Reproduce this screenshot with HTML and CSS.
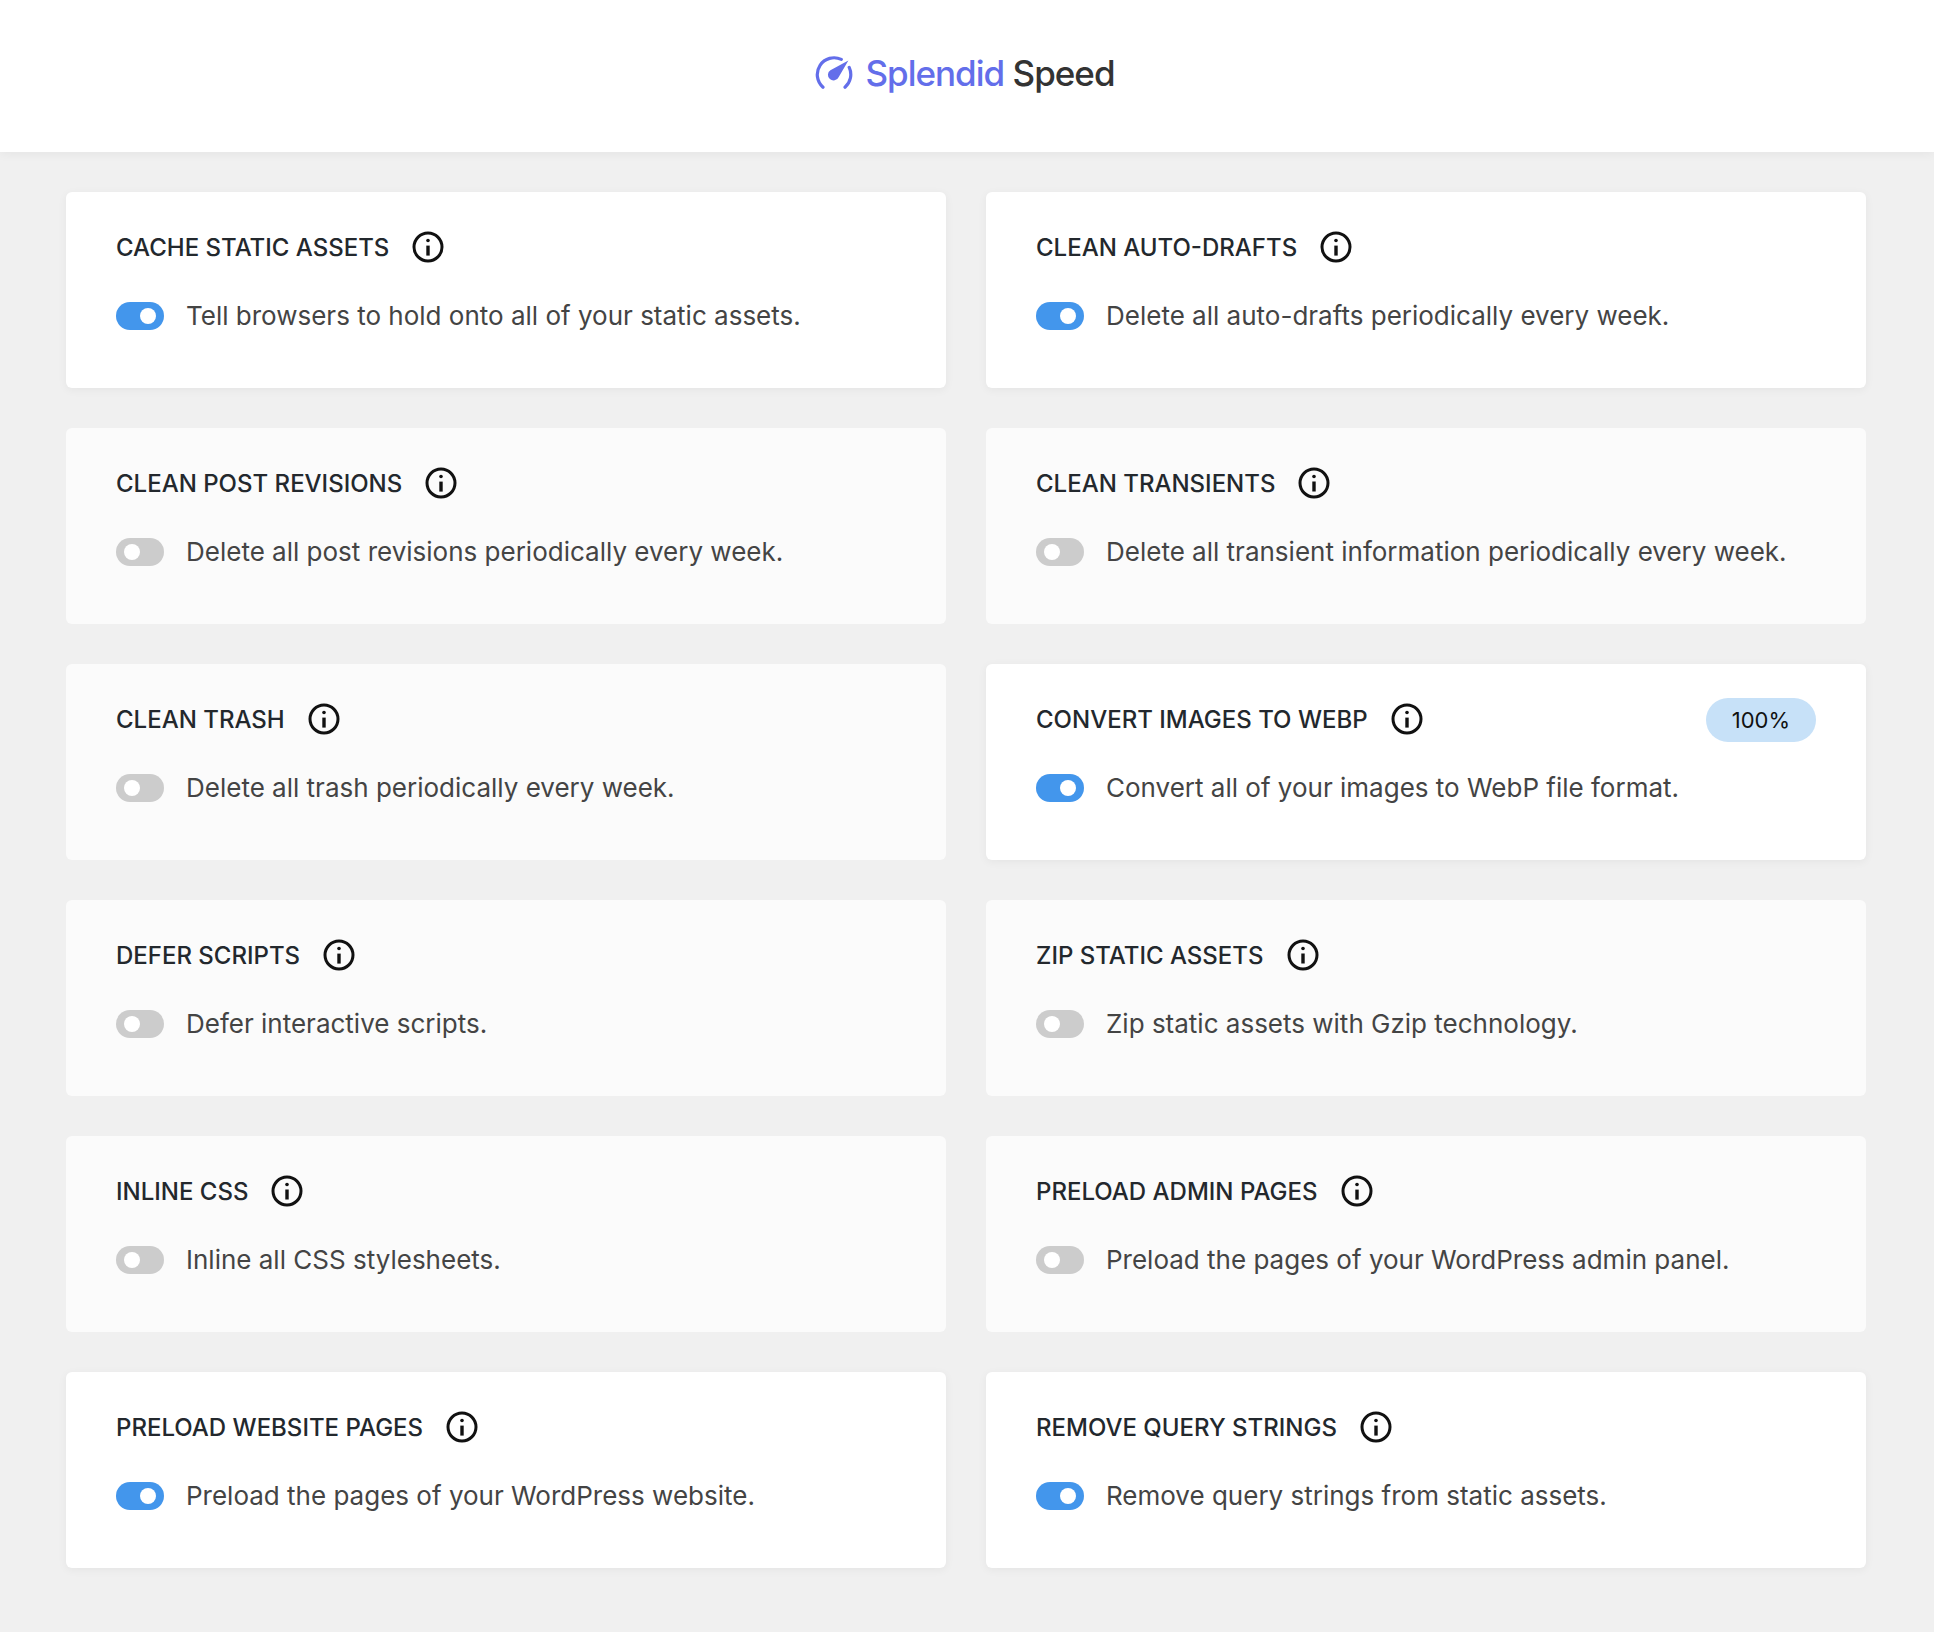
FILE: index.html
```html
<!DOCTYPE html>
<html lang="en">
<head>
<meta charset="utf-8">
<meta name="viewport" content="width=device-width, initial-scale=1">
<title>Splendid Speed</title>
<link rel="stylesheet" href="styles.css">
</head>
<body>
<svg class="sprite" aria-hidden="true">
  <symbol id="info" viewBox="0 0 32 32">
    <circle cx="16" cy="16" r="14" fill="none" stroke="currentColor" stroke-width="3"/>
    <circle cx="16" cy="9.5" r="1.8" fill="currentColor"/>
    <path d="M14.3 14.6h3.4v10h-3.4z" fill="currentColor"/>
  </symbol>
</svg>
<header class="header">
  <h1 class="logo">
    <svg class="logo-icon" viewBox="0 0 38 34" aria-hidden="true">
      <g fill="none" stroke="currentColor" stroke-width="3.2" stroke-linecap="round">
        <path d="M7.98 31.18A16.8 16.8 0 0 1 26.3 3.4"/>
        <path d="M34.2 11.4A16.8 16.8 0 0 1 30.02 31.18"/>
      </g>
      <path d="M33.4 4.4 23.6 21.2A5.6 5.6 0 1 1 15.4 14.2Z" fill="currentColor"/>
    </svg>
    <span><span class="logo-accent">Splendid</span> Speed</span>
  </h1>
</header>
<main class="grid">
  <section class="card card-on">
    <div class="card-head"><h2 class="title">Cache static assets</h2><button class="info" type="button" aria-label="About cache static assets"><svg><use href="#info"/></svg></button></div>
    <label class="setting"><input class="toggle" type="checkbox" checked><span>Tell browsers to hold onto all of your static assets.</span></label>
  </section>
  <section class="card card-on">
    <div class="card-head"><h2 class="title">Clean auto-drafts</h2><button class="info" type="button" aria-label="About clean auto-drafts"><svg><use href="#info"/></svg></button></div>
    <label class="setting"><input class="toggle" type="checkbox" checked><span>Delete all auto-drafts periodically every week.</span></label>
  </section>
  <section class="card">
    <div class="card-head"><h2 class="title">Clean post revisions</h2><button class="info" type="button" aria-label="About clean post revisions"><svg><use href="#info"/></svg></button></div>
    <label class="setting"><input class="toggle" type="checkbox"><span>Delete all post revisions periodically every week.</span></label>
  </section>
  <section class="card">
    <div class="card-head"><h2 class="title">Clean transients</h2><button class="info" type="button" aria-label="About clean transients"><svg><use href="#info"/></svg></button></div>
    <label class="setting"><input class="toggle" type="checkbox"><span>Delete all transient information periodically every week.</span></label>
  </section>
  <section class="card">
    <div class="card-head"><h2 class="title">Clean trash</h2><button class="info" type="button" aria-label="About clean trash"><svg><use href="#info"/></svg></button></div>
    <label class="setting"><input class="toggle" type="checkbox"><span>Delete all trash periodically every week.</span></label>
  </section>
  <section class="card card-on">
    <div class="card-head"><h2 class="title">Convert images to WebP</h2><button class="info" type="button" aria-label="About convert images to WebP"><svg><use href="#info"/></svg></button><span class="badge">100%</span></div>
    <label class="setting"><input class="toggle" type="checkbox" checked><span>Convert all of your images to WebP file format.</span></label>
  </section>
  <section class="card">
    <div class="card-head"><h2 class="title">Defer scripts</h2><button class="info" type="button" aria-label="About defer scripts"><svg><use href="#info"/></svg></button></div>
    <label class="setting"><input class="toggle" type="checkbox"><span>Defer interactive scripts.</span></label>
  </section>
  <section class="card">
    <div class="card-head"><h2 class="title">Zip static assets</h2><button class="info" type="button" aria-label="About zip static assets"><svg><use href="#info"/></svg></button></div>
    <label class="setting"><input class="toggle" type="checkbox"><span>Zip static assets with Gzip technology.</span></label>
  </section>
  <section class="card">
    <div class="card-head"><h2 class="title">Inline CSS</h2><button class="info" type="button" aria-label="About inline CSS"><svg><use href="#info"/></svg></button></div>
    <label class="setting"><input class="toggle" type="checkbox"><span>Inline all CSS stylesheets.</span></label>
  </section>
  <section class="card">
    <div class="card-head"><h2 class="title">Preload admin pages</h2><button class="info" type="button" aria-label="About preload admin pages"><svg><use href="#info"/></svg></button></div>
    <label class="setting"><input class="toggle" type="checkbox"><span>Preload the pages of your WordPress admin panel.</span></label>
  </section>
  <section class="card card-on">
    <div class="card-head"><h2 class="title">Preload website pages</h2><button class="info" type="button" aria-label="About preload website pages"><svg><use href="#info"/></svg></button></div>
    <label class="setting"><input class="toggle" type="checkbox" checked><span>Preload the pages of your WordPress website.</span></label>
  </section>
  <section class="card card-on">
    <div class="card-head"><h2 class="title">Remove query strings</h2><button class="info" type="button" aria-label="About remove query strings"><svg><use href="#info"/></svg></button></div>
    <label class="setting"><input class="toggle" type="checkbox" checked><span>Remove query strings from static assets.</span></label>
  </section>
</main>
</body>
</html>
```
FILE: styles.css
```css
* {
  box-sizing: border-box;
}

body {
  margin: 0;
  background: #f0f0f0;
  color: #444;
  font-family: Inter, "Liberation Sans", sans-serif;
}

.sprite {
  display: none;
}

.header {
  display: flex;
  justify-content: center;
  padding: 49px 24px 55px 20px;
  background: #fff;
  box-shadow: 0 2px 10px rgba(0, 0, 0, 0.05);
}

.logo {
  display: flex;
  align-items: center;
  gap: 12px;
  margin: 0;
  color: #333;
  font-size: 35px;
  font-weight: 500;
  line-height: 48px;
  letter-spacing: -1px;
}

.logo-icon {
  width: 38px;
  height: 34px;
  color: #636eea;
}

.logo-accent {
  color: #636eea;
}

.grid {
  display: grid;
  grid-template-columns: 1fr 1fr;
  gap: 40px;
  padding: 40px 68px 64px 66px;
}

.card {
  padding: 34px 50px 52px;
  border-radius: 6px;
  background: #fbfbfb;
}

.card-on {
  background: #fff;
  box-shadow: 0 2px 10px rgba(0, 0, 0, 0.05);
}

.card-head {
  display: flex;
  align-items: center;
  height: 44px;
}

.title {
  margin: 0;
  color: #23282d;
  font-size: 24px;
  font-weight: 500;
  line-height: 44px;
  text-transform: uppercase;
}

.info {
  width: 32px;
  height: 32px;
  margin: 0 0 2px 23px;
  padding: 0;
  border: 0;
  background: none;
  color: #111;
  cursor: pointer;
}

.info svg {
  display: block;
  width: 32px;
  height: 32px;
}

.badge {
  margin-left: auto;
  padding: 0 26px;
  border-radius: 22px;
  background: #c7e1f8;
  color: #111;
  font-size: 22px;
  line-height: 44px;
}

.setting {
  display: flex;
  align-items: center;
  gap: 22px;
  margin-top: 26px;
  font-size: 26px;
  line-height: 40px;
}

.toggle {
  flex: none;
  width: 48px;
  height: 28px;
  margin: 0;
  padding: 6px 8px;
  border-radius: 14px;
  background: #ccc;
  appearance: none;
  cursor: pointer;
}

.toggle::before {
  content: "";
  display: block;
  width: 16px;
  height: 16px;
  border-radius: 50%;
  background: #fff;
}

.toggle:checked {
  background: #4396ec;
}

.toggle:checked::before {
  margin-left: auto;
}
```
